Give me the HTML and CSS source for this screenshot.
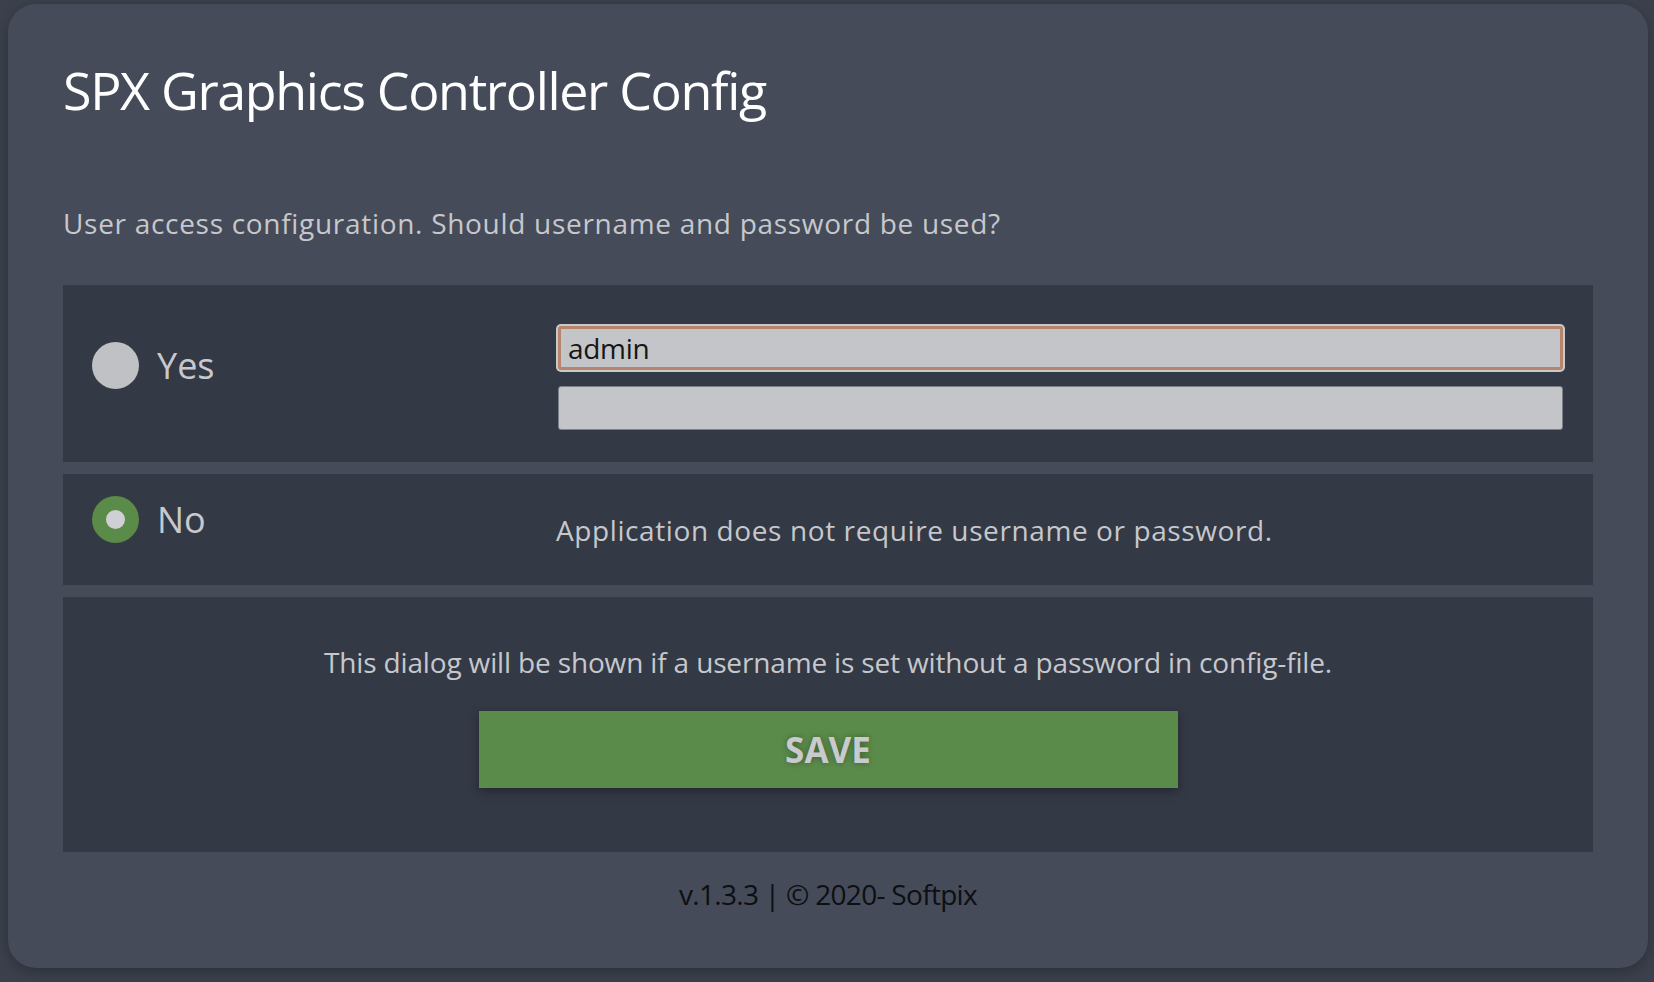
FILE: index.html
```html
<!DOCTYPE html>
<html lang="en">
<head>
<meta charset="utf-8">
<title>SPX Graphics Controller Config</title>
<link rel="stylesheet" href="styles.css">
</head>
<body>
<div class="card">
  <h1 class="title">SPX Graphics Controller Config</h1>
  <p class="intro">User access configuration. Should username and password be used?</p>

  <div class="option option-yes">
    <label class="choice">
      <span class="radio"></span>
      <span class="choice-label">Yes</span>
    </label>
    <div class="fields">
      <input class="field field-focus" type="text" value="admin">
      <input class="field" type="password" value="">
    </div>
  </div>

  <div class="option option-no">
    <label class="choice">
      <span class="radio radio-on"></span>
      <span class="choice-label">No</span>
    </label>
    <div class="desc">Application does not require username or password.</div>
  </div>

  <div class="notice">
    <p class="notice-text">This dialog will be shown if a username is set without a password in config-file.</p>
    <button class="save" type="button">SAVE</button>
  </div>

  <div class="footer">v.1.3.3 | © 2020- Softpix</div>
</div>
</body>
</html>
```
FILE: styles.css
```css
* { box-sizing: border-box; }

html, body {
  margin: 0;
  height: 100%;
}

body {
  background: #3b404c;
  padding: 4px 6px 0 8px;
  font-family: "Open Sans", "Noto Sans", sans-serif;
}

.card {
  background: #454b59;
  height: 964px;
  border-radius: 28px;
  padding: 54px 55px 0 55px;
  box-shadow: 0 4px 14px rgba(0, 0, 0, 0.25);
}

.title {
  margin: 0;
  font-size: 52px;
  line-height: 64px;
  font-weight: 400;
  color: #ffffff;
  letter-spacing: -1.35px;
}

.intro {
  margin: 81px 0 0;
  font-size: 28px;
  line-height: 40px;
  color: #c6c8cc;
  letter-spacing: 0.7px;
}

.option {
  background: #343946;
  display: grid;
  grid-template-columns: 466px 1fr;
  align-items: start;
  padding-left: 29px;
  padding-right: 30px;
}

.option-yes {
  margin-top: 42px;
  padding-top: 41px;
  padding-bottom: 32px;
}

.option-no {
  margin-top: 12px;
  padding-top: 22px;
  padding-bottom: 35px;
}

.choice {
  display: flex;
  align-items: center;
  gap: 18px;
}

.option-yes .choice {
  margin-top: 16px;
}

.radio {
  width: 47px;
  height: 47px;
  border-radius: 50%;
  background: #c0c1c5;
  flex: none;
}

.radio-on {
  background: #cfd0d4;
  border: 14.5px solid #5a8b49;
}

.choice-label {
  font-size: 36px;
  line-height: 46px;
  color: #c8c9cd;
}

.fields {
  display: flex;
  flex-direction: column;
  gap: 16px;
}

.field {
  display: block;
  width: 100%;
  height: 44px;
  background: #c4c5c9;
  border: 1px solid #7d8087;
  border-radius: 3px;
  padding: 0 9px;
  font-family: "Open Sans", "Noto Sans", sans-serif;
  font-size: 28px;
  color: #161616;
  letter-spacing: -0.3px;
}

.field-focus {
  border: 3px solid #b5866b;
  padding: 0 7px;
  box-shadow: 0 0 0 2px #c9c9cc;
  outline: none;
}

.desc {
  margin-top: 14px;
  margin-left: -2px;
  font-size: 28px;
  line-height: 40px;
  color: #c6c8cc;
  letter-spacing: 0.6px;
}

.notice {
  margin-top: 12px;
  background: #343946;
  padding: 45px 0 64px;
  display: flex;
  flex-direction: column;
  align-items: center;
}

.notice-text {
  margin: 0;
  font-size: 28px;
  line-height: 40px;
  color: #c6c8cc;
  letter-spacing: -0.15px;
}

.save {
  margin-top: 29px;
  width: 699px;
  height: 77px;
  background: #5b8b4a;
  border: none;
  border-radius: 0;
  font-family: "Open Sans", "Noto Sans", sans-serif;
  font-weight: 700;
  font-size: 35px;
  color: #c9cacd;
  text-shadow: 0 0 6px rgba(0, 0, 0, 0.35);
  box-shadow: 0 3px 10px rgba(0, 0, 0, 0.35);
  cursor: pointer;
}

.footer {
  margin-top: 22px;
  text-align: center;
  font-size: 28px;
  line-height: 40px;
  color: #0e0f12;
  letter-spacing: -0.7px;
}
```
